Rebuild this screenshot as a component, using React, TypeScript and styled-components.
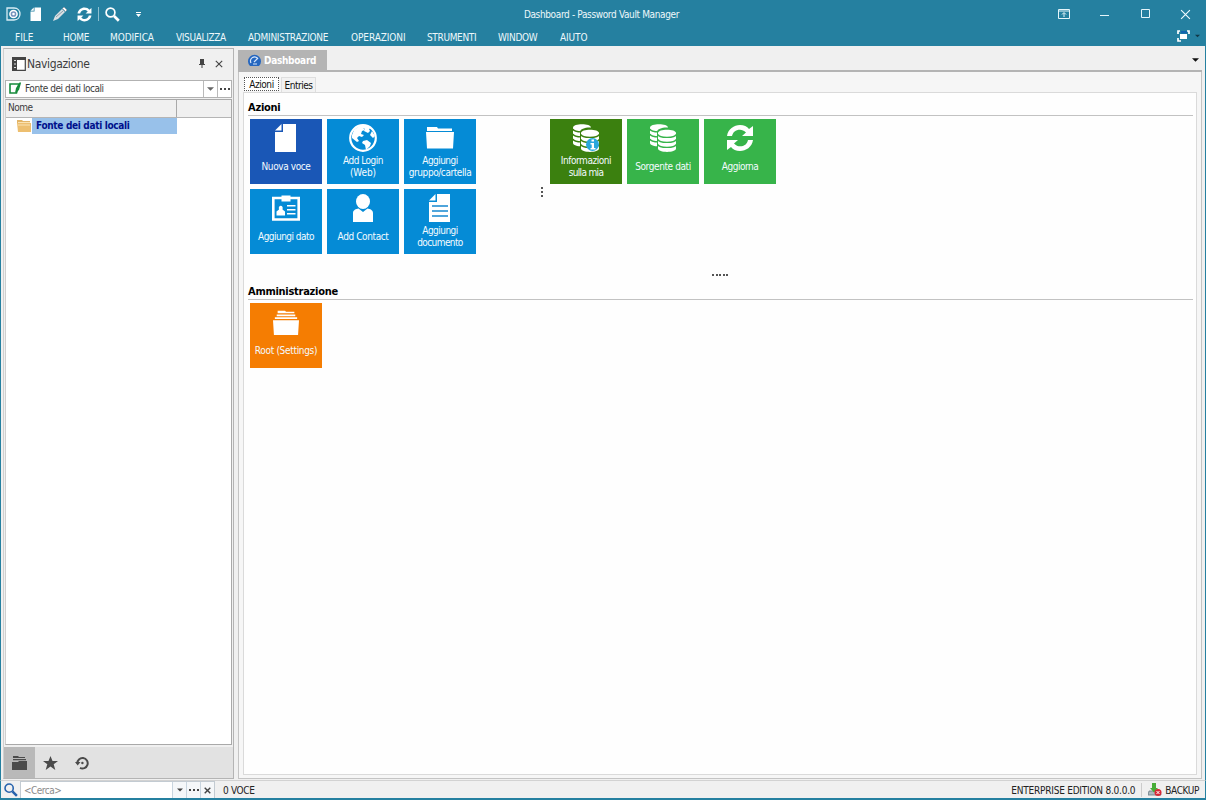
import React from "react";
import styled, { createGlobalStyle } from "styled-components";

const GlobalStyle = createGlobalStyle`
  * { box-sizing: border-box; }
  body { margin: 0; overflow: hidden; }
  body, input { font-family: "DejaVu Sans Condensed", "DejaVu Sans", sans-serif; font-size: 10px; color: #3c3c3c; }
  svg { display: block; flex: none; }
`;

const TEAL = "#2580a0";

const Window = styled.div`
  display: flex; flex-direction: column; width: 1206px; height: 800px;
  background: #f0f0f0; white-space: nowrap;
`;
const Label = styled.span<{ $ls?: number }>`
  letter-spacing: ${p => p.$ls ?? 0}px;
  flex: none;
`;

const Banner = styled.header`background: ${TEAL}; color: #eef8fb; height: 46px; flex: none;`;
const TitleBar = styled.div`display: grid; grid-template-columns: 300px 1fr 300px; height: 28px; align-items: center;`;
const QuickTools = styled.div`display: flex; align-items: center; padding-left: 4px; height: 28px;`;
const Tool = styled.span<{ $w: number }>`display: flex; width: ${p => p.$w}px; justify-content: center;`;
const Title = styled.div`text-align: center; padding-right: 3px; letter-spacing: -0.36px;`;
const WindowButtons = styled.div`display: flex; justify-content: flex-end; padding-right: 15px; gap: 28px; align-items: center;`;
const MenuBar = styled.nav`display: flex; height: 18px; align-items: center; padding-left: 15px;`;
const MenuItem = styled.span<{ $w: number; $ls: number }>`width: ${p => p.$w}px; letter-spacing: ${p => p.$ls}px; flex: none;`;
const MenuEnd = styled.span`margin-left: auto; display: flex; align-items: center; gap: 5px; padding: 0 6px 2px 0;`;

const Body = styled.div`
  display: flex; height: 734px; flex: none; padding: 2px 3px 0 2px; gap: 4px;
  border-left: 1px solid ${TEAL}; border-right: 1px solid ${TEAL};
`;
const Panel = styled.aside`
  width: 231px; height: 731px; border: 1px solid #b4b4b4; border-left-color: #d0d0d0; display: flex; flex-direction: column;
  flex: none; padding: 0 1px;
`;
const PanelHead = styled.div`display: flex; align-items: center; height: 31px; padding: 0 9px 1px 7px; gap: 1px; font-size: 12px;`;
const PanelActions = styled.span`margin-left: auto; display: flex; gap: 10px; align-items: center;`;
const Combo = styled.div`
  display: flex; height: 18px; border: 1px solid #b2b2b2; background: #fff; align-items: center; padding-left: 3px; gap: 4px;
`;
const ComboButton = styled.span<{ $w: number }>`
  width: ${p => p.$w}px; height: 100%; border-left: 1px solid #bababa; display: flex; align-items: center; justify-content: center;
`;
const ComboEnd = styled.span`margin-left: auto; display: flex; height: 100%;`;
const Tree = styled.div`margin-top: 1px; height: 647px; background: #fff; border: 1px solid #a9a9a9; border-left-color: #cfcfcf;`;
const TreeHead = styled.div`
  display: grid; grid-template-columns: 170px 1fr; height: 18px; background: #f0f0f0; border-bottom: 1px solid #b5b5b5;
  letter-spacing: -0.5px;
  & > span { padding: 2px; }
  & > span + span { border-left: 1px solid #a9a9a9; }
`;
const TreeRow = styled.div`display: flex; height: 16px; align-items: center; padding-left: 11px; gap: 1px;`;
const Selected = styled.span`
  background: #98c1ea; color: #00108c; font-weight: bold; width: 145px; height: 16px; line-height: 16px; padding-left: 4px;
  letter-spacing: -0.33px;
`;
const NavTabs = styled.div`display: flex; height: 31px; margin: 2px -1px 0; background: #e2e2e2;`;
const NavTab = styled.span<{ $on?: boolean }>`
  width: 31px; height: 31px; display: flex; align-items: center; justify-content: center; background: ${p => (p.$on ? "#b9b9b9" : "transparent")};
`;

const Main = styled.main`flex: 1; display: flex; flex-direction: column; min-width: 0; padding-top: 2px;`;
const DocTabs = styled.div`display: flex; height: 22px; border-bottom: 2px solid #b4b4b4; align-items: center; padding-right: 3px;`;
const DocTab = styled.div`
  display: flex; align-items: center; gap: 3px; width: 89px; height: 21px; background: #b4b4b4; color: #fff;
  font-weight: bold; padding-left: 10px; margin-right: auto;
`;
const Frame = styled.div`height: 707px; border: 1px solid #c4c4c4; border-top: 0; background: #f6f6f6; padding: 5px 4px 4px;`;
const SubTabs = styled.div`display: flex; height: 15px; align-items: flex-start; padding-left: 1px; color: #111; letter-spacing: -0.45px;`;
const SubTab = styled.span<{ $on?: boolean }>`
  border: 1px ${p => (p.$on ? "dotted #555" : "solid #dedede")}; background: ${p => (p.$on ? "#fff" : "#f2f2f2")};
  width: ${p => (p.$on ? 35 : 35)}px; height: ${p => (p.$on ? 14 : 15)}px; line-height: ${p => (p.$on ? 13 : 16)}px; text-align: center;
  margin-right: 2px; border-bottom-width: ${p => (p.$on ? 1 : 0)}px;
`;
const Page = styled.section`
  height: 683px; border: 1px solid #dadada; background: #fefefe; padding: 8px 3px 0 4px;
`;
const Heading = styled.h2`
  margin: 0; height: 15px; border-bottom: 1px solid #c2c2c2; font-size: 11px; line-height: 13px; color: #000; font-weight: bold;
  letter-spacing: -0.27px;
`;
const Board = styled.div`display: flex; padding: 3px 0 0 2px; height: 158px;`;
const Tiles = styled.div<{ $w: number }>`display: grid; grid-template-columns: repeat(3, 72px); grid-auto-rows: 65px; gap: 5px; width: ${p => p.$w}px; flex: none; align-content: start;`;
const Tile = styled.button<{ $bg: string }>`
  border: 0; padding: 3px 0 0; margin: 0; background: ${p => p.$bg}; color: #f4fbff; font: inherit;
  display: flex; flex-direction: column; align-items: center;
  svg { height: 32px; }
`;
const TileText = styled.span`
  height: 25px; display: flex; flex-direction: column; justify-content: center; align-items: center; line-height: 11.5px;
`;
const Dots = styled.span<{ $vertical?: boolean }>`
  display: flex; flex-direction: ${p => (p.$vertical ? "column" : "row")}; gap: ${p => (p.$vertical ? 2 : 1.5)}px;
  margin: ${p => (p.$vertical ? "68px 7px 0 0" : "0 0 9px 464px")};
  i { width: 2px; height: 2px; background: #555; }
`;

const Status = styled.footer`
  height: 20px; flex: none; display: flex; align-items: center; border: 1px solid ${TEAL}; border-top-color: #d2d2d2; border-bottom-width: 2px;
  padding-left: 3px;
`;
const Search = styled.div`
  display: flex; align-items: center; width: 195px; height: 17px; margin-left: 2px; background: #fff; border: 1px solid #c3cbd2; border-bottom: 0;
  padding-left: 3px; color: #8b8b8b;
`;
const SearchButton = styled.span`width: 14px; height: 100%; border-left: 1px solid #c9d5df; background: #f5f7f9; display: flex; align-items: center; justify-content: center;`;
const StatusText = styled.span<{ $ls: number; $pl?: number }>`color: #222; letter-spacing: ${p => p.$ls}px; padding: 2px 0 0 ${p => p.$pl ?? 0}px;`;
const StatusEnd = styled.span`margin-left: auto; display: flex; align-items: center; padding-right: 6px;`;
const Divider = styled.i<{ $c: string }>`width: 1px; height: 14px; background: ${p => p.$c};`;

const Arrow = ({ c = "#444", s = 7 }: { c?: string; s?: number }) => (
  <svg width={s} height="4" viewBox="0 0 8 4"><path d="M0 0h8L4 4z" fill={c} /></svg>
);
const Cross = ({ c = "#444", s = 8, w = 1.4 }: { c?: string; s?: number; w?: number }) => (
  <svg width={s} height={s} viewBox="0 0 10 10"><path d="M1 1l8 8M9 1l-8 8" stroke={c} strokeWidth={w} /></svg>
);
const Ellipsis = () => (
  <svg width="10" height="2" viewBox="0 0 10 2"><path d="M0 0h2v2H0zM4 0h2v2H4zM8 0h2v2H8z" fill="#444" /></svg>
);
const Lens = ({ c, h, s }: { c: string; h: string; s: number }) => (
  <svg width={s} height={s} viewBox="0 0 15 15">
    <circle cx="5.500" cy="5.500" r="4.400" fill="none" stroke={c} strokeWidth="1.700" />
    <path d="M9 9l4.800 4.800" stroke={h} strokeWidth="2.700" />
  </svg>
);
const Refresh = ({ w }: { w: number }) => (
  <svg width={w} viewBox="0 0 28 28" height={w}>
    <g fill="#fff">
      <path d="M1 12C2 5 8 1 14 1c4 0 7 1.500 9 4l4-3v10H16l4-3.500C18 6.500 16 5.700 14 5.700 9.500 5.700 7 8 6 12z" />
      <path d="M27 16c-1 7-7 11-13 11-4 0-7-1.500-9-4l-4 3V16h11l-4 3.500c2 2 4 2.800 6 2.800 4.500 0 7-2.300 8-6.300z" />
    </g>
  </svg>
);
const Sheet = ({ lines, small }: { lines?: boolean; small?: boolean }) => (
  <svg width={small ? 12 : 22} height={small ? 14 : 32} viewBox={small ? "0 0 22 28" : "0 -1 22 32"}>
    <path d="M8 1h13v28H0V9h8z" fill="#fff" /><path d="M6.500 1v6.500H0z" fill="#fff" />
    {lines && <path d="M3 13h16M3 18h16M3 23h16" stroke="#1688cf" strokeWidth="1.300" />}
  </svg>
);
const Globe = () => (
  <svg width="28" viewBox="0 0 28 32">
    <circle cx="14" cy="16" r="12.800" fill="none" stroke="#fff" strokeWidth="2.200" />
    <path d="M3 13l2-5 5-4 4-1 3 2-3 1 2 2-3 1-1 3 3 1-2 2-3-1-2 2 2 3-2 1-5-4zM16 3l6 3-2 1 1 2-2 2-4-2 1-2-2-1zM14 19l4-1 4 3-1 3-4 4-1-5-3-2zM23 9l3 5-2 2-3-3z" fill="#fff" />
  </svg>
);
const Folder = () => (
  <svg width="28" viewBox="0 0 28 32">
    <path d="M1 7.500V5h10l1 1.500h14V9H1zM0 10h28l-1 16.500H1z" fill="#fff" />
  </svg>
);
const IdCard = () => (
  <svg width="28" viewBox="0 0 28 32">
    <path d="M1.300 6h25.400v21.500H1.300z" fill="none" stroke="#fff" strokeWidth="2.600" />
    <path d="M9.500 3.500h9v6h-9zM4.500 23.500v-4l2.500-2c-1.500-5 5-5 3.500 0l2.500 2v4zM15 13h8.500v1.500H15zM15 17h8.500v1.500H15zM15 21h8.500v1.500H15z" fill="#fff" />
  </svg>
);
const Person = () => (
  <svg width="22" viewBox="0 0 22 32">
    <ellipse cx="11" cy="9.500" rx="7" ry="7.500" fill="#fff" />
    <path d="M1 30V21c0-3 3-4 5.500-4.500L11 20l4.500-3.500C18 17 21 18 21 21v9z" fill="#fff" />
  </svg>
);
const Disk = ({ x, y, bg }: { x: number; y: number; bg: string }) => (
  <g transform={`translate(${x} ${y})`}>
    <path d="M0 3.500C0-1 18-1 18 3.500V19c0 4.500-18 4.500-18 0z" fill="#fff" />
    <path d="M0 5c1 3.800 17 3.800 18 0M0 10c1 3.800 17 3.800 18 0M0 15c1 3.800 17 3.800 18 0" fill="none" stroke={bg} strokeWidth="1.400" />
  </g>
);
const Database = ({ bg, info }: { bg: string; info?: boolean }) => (
  <svg width="28" viewBox="0 0 28 32">
    <Disk x={1} y={2} bg={bg} />
    <path d="M8 10C8 4 27 4 27 10v20H10L8 27z" fill={bg} />
    <Disk x={9} y={7.500} bg={bg} />
    {info && <><circle cx="20.500" cy="22.500" r="6.500" fill="#28a7dd" /><path d="M19.500 17.500H22v2h-2.500zM18.500 21H22v5h1.500v1.500h-5V26h1.200v-3.500h-1.200z" fill="#fff" /></>}
  </svg>
);
const Folders = () => (
  <svg width="26" viewBox="0 0 28 32">
    <path d="M5 4h8l1 1h9v1.500H5zM4 8h20v1.800H4zM2 11h24v1.800H2zM0 14h28l-1 16H1z" fill="#fff" />
  </svg>
);

const menus: [string, number, number][] = [
  ["FILE", 48, 0], ["HOME", 47, -0.3], ["MODIFICA", 66, -0.1], ["VISUALIZZA", 72, -0.35], ["ADMINISTRAZIONE", 103, -0.28],
  ["OPERAZIONI", 76, -0.1], ["STRUMENTI", 71, -0.35], ["WINDOW", 62, -0.3], ["AIUTO", 40, -0.1],
];
type Line = [text: string, spacing: number];
type TileData = { text: Line[]; bg: string; icon: React.ReactNode };
const BLUE = "#058bd6";
const GREEN = "#37b44a";
const actions: TileData[] = [
  { text: [["Nuova voce", -0.4]], bg: "#1a57b6", icon: <Sheet /> },
  { text: [["Add Login", -0.5], ["(Web)", -0.1]], bg: BLUE, icon: <Globe /> },
  { text: [["Aggiungi", -0.55], ["gruppo/cartella", -0.42]], bg: BLUE, icon: <Folder /> },
  { text: [["Aggiungi dato", -0.53]], bg: BLUE, icon: <IdCard /> },
  { text: [["Add Contact", -0.4]], bg: BLUE, icon: <Person /> },
  { text: [["Aggiungi", -0.55], ["documento", -0.6]], bg: BLUE, icon: <Sheet lines /> },
];
const sources: TileData[] = [
  { text: [["Informazioni", -0.45], ["sulla mia", -0.65]], bg: "#3b800f", icon: <Database bg="#3b800f" info /> },
  { text: [["Sorgente dati", -0.4]], bg: GREEN, icon: <Database bg={GREEN} /> },
  { text: [["Aggiorna", -0.5]], bg: GREEN, icon: <Refresh w={28} /> },
];
const admin: TileData[] = [{ text: [["Root (Settings)", -0.32]], bg: "#f57d02", icon: <Folders /> }];

const TileGrid = ({ items, width }: { items: TileData[]; width: number }) => (
  <Tiles $w={width}>
    {items.map(t => (
      <Tile key={t.text.join()} $bg={t.bg}>
        {t.icon}
        <TileText>{t.text.map(([l, ls]) => <Label key={l} $ls={ls}>{l}</Label>)}</TileText>
      </Tile>
    ))}
  </Tiles>
);

export default function App() {
  return (
    <Window>
      <GlobalStyle />
      <Banner>
        <TitleBar>
          <QuickTools>
            <Tool $w={18}>
              <svg width="15" height="14" viewBox="0 0 15 14">
                <path d="M1 1h7c4 0 6 3 6 6s-2 6-6 6H1z" fill="none" stroke="#d8edf5" strokeWidth="1.300" />
                <circle cx="7.500" cy="7" r="3.600" fill="#7793bd" stroke="#fff" strokeWidth="1.500" /><circle cx="7.500" cy="7" r="1.300" fill="#fff" />
              </svg>
            </Tool>
            <Tool $w={28}><Sheet small /></Tool>
            <Tool $w={20}>
              <svg width="14" height="14" viewBox="0 0 14 14">
                <path d="M0 14l2-5 7-7 3 3-7 7z" fill="#d9dfe3" /><path d="M9.500 1.500L11 0l3 3-1.500 1.500zM3 10l7-6" fill="#fff" stroke="#8ba0ad" />
              </svg>
            </Tool>
            <Tool $w={28}><Refresh w={15} /></Tool>
            <Divider $c="#8dbfd0" />
            <Tool $w={27}><Lens c="#fff" h="#fff" s={15} /></Tool>
            <Tool $w={25}>
              <svg width="5" height="5" viewBox="0 0 5 5"><path d="M0 0h5v1H0zM0 2h5L2.500 5z" fill="#fff" /></svg>
            </Tool>
          </QuickTools>
          <Title>Dashboard - Password Vault Manager</Title>
          <WindowButtons>
            <svg width="12" height="10" viewBox="0 0 12 10"><path d="M.500.500h11v9H.500zM0 2h12M6 8V4M4 5.500l2-2 2 2" fill="none" stroke="#e5f5fa" /></svg>
            <svg width="12" height="10" viewBox="0 0 12 10"><path d="M2 6.500h9" stroke="#e5f5fa" /></svg>
            <svg width="14" height="10" viewBox="0 0 14 10"><path d="M3.500.500h8v8h-8z" fill="none" stroke="#e5f5fa" /></svg>
            <Cross c="#f2fbff" s={11} w={1} />
          </WindowButtons>
        </TitleBar>
        <MenuBar>
          {menus.map(([m, w, ls]) => <MenuItem key={m} $w={w} $ls={ls}>{m}</MenuItem>)}
          <MenuEnd>
            <svg width="13" height="12" viewBox="0 0 13 12">
              <path d="M3 4h7v5H3z" fill="#fff" /><path d="M4 1h6v2.500H4z" fill="#1264ae" />
              <path d="M1 4V1h2M10 1h2v3M1 8v3h3" fill="none" stroke="#fff" strokeWidth="1.700" />
            </svg>
            <Arrow c="#123847" s={5} />
          </MenuEnd>
        </MenuBar>
      </Banner>

      <Body>
        <Panel>
          <PanelHead>
            <svg width="14" height="14" viewBox="0 0 14 14">
              <path d="M.700.700h12.600v12.600H.700z" fill="#fff" stroke="#444" strokeWidth="1.200" /><path d="M0 0h5v14H0zM5 0h9v3H5z" fill="#444" />
              <path d="M2 3.500h2M2 7h2M2 10.500h2" stroke="#ddd" />
            </svg>
            <Label $ls={-0.35}>Navigazione</Label>
            <PanelActions>
              <svg width="6" height="9" viewBox="0 0 6 9"><path d="M1 0h4v5h1v1H0V5h1zM2.500 6h1v3h-1z" fill="#444" /></svg>
              <Cross />
            </PanelActions>
          </PanelHead>
          <Combo>
            <svg width="12" height="13" viewBox="0 0 12 13">
              <path d="M1 2h9L7.500 11H1z" fill="#fff" stroke="#168b3b" strokeWidth="1.600" /><path d="M6 11l1-5 4-6 1 1-2 7z" fill="#168b3b" />
            </svg>
            <Label $ls={-0.45}>Fonte dei dati locali</Label>
            <ComboEnd>
              <ComboButton $w={14}><Arrow c="#666" /></ComboButton>
              <ComboButton $w={14}><Ellipsis /></ComboButton>
            </ComboEnd>
          </Combo>
          <Tree>
            <TreeHead><span>Nome</span><span /></TreeHead>
            <TreeRow>
              <svg width="14" height="13" viewBox="0 0 14 13">
                <path d="M0 1h5l1 1h7v2H0z" fill="#e3b568" /><path d="M0 4h14v9H1z" fill="#edbf70" /><path d="M1 3.500h12M1 6h12" stroke="#fae3b4" />
              </svg>
              <Selected>Fonte dei dati locali</Selected>
            </TreeRow>
          </Tree>
          <NavTabs>
            <NavTab $on>
              <svg width="15" height="14" viewBox="0 0 15 14"><path d="M1 0h5l1 1h6v1H1zM1 3h13v1.300H1zM0 6h6l1-1h8v9H0z" fill="#4b4b4b" /></svg>
            </NavTab>
            <NavTab>
              <svg width="15" height="14" viewBox="0 0 15 14"><path d="M7.500 0l2 5H15l-4.300 3.300 1.600 5.700-4.800-3.500L2.700 14l1.600-5.700L0 5h5.500z" fill="#4b4b4b" /></svg>
            </NavTab>
            <NavTab>
              <svg width="14" height="14" viewBox="0 0 14 14">
                <path d="M2.300 7.500A5.200 5.200 0 1 1 5 11.800" fill="none" stroke="#4b4b4b" strokeWidth="2" /><path d="M0 6h5.500L2.700 9.500z" fill="#4b4b4b" /><circle cx="7.400" cy="7" r="1.200" fill="#4b4b4b" />
              </svg>
            </NavTab>
          </NavTabs>
        </Panel>

        <Main>
          <DocTabs>
            <DocTab>
              <svg width="13" height="13" viewBox="0 0 13 13">
                <path d="M2 12a6.500 6.500 0 1 1 9 0z" fill="#2466bf" /><path d="M3 9a4 4 0 0 1 7-4M6 8l4-4M5 10h4" fill="none" stroke="#d7e7fb" strokeWidth="1.200" />
              </svg>
              <Label $ls={-0.3}>Dashboard</Label>
            </DocTab>
            <Arrow c="#111" />
          </DocTabs>
          <Frame>
            <SubTabs><SubTab $on>Azioni</SubTab><SubTab>Entries</SubTab></SubTabs>
            <Page>
              <Heading>Azioni</Heading>
              <Board>
                <TileGrid items={actions} width={291} />
                <Dots $vertical><i /><i /><i /></Dots>
                <TileGrid items={sources} width={226} />
              </Board>
              <div>
                <Dots><i /><i /><i /><i /><i /></Dots>
                <Heading>Amministrazione</Heading>
                <Board><TileGrid items={admin} width={226} /></Board>
              </div>
            </Page>
          </Frame>
        </Main>
      </Body>

      <Status>
        <Lens c="#2662ac" h="#2662ac" s={14} />
        <Search>
          <Label $ls={-0.5}>&lt;Cerca&gt;</Label>
          <ComboEnd>
            <SearchButton><Arrow s={6} /></SearchButton>
            <SearchButton><Ellipsis /></SearchButton>
            <SearchButton><Cross s={7} w={2} /></SearchButton>
          </ComboEnd>
        </Search>
        <StatusText $ls={-0.35} $pl={8}>0 VOCE</StatusText>
        <StatusEnd>
          <StatusText $ls={-0.23}>ENTERPRISE EDITION 8.0.0.0</StatusText>
          <Tool $w={13}><Divider $c="#ccc" /></Tool>
          <svg width="14" height="13" viewBox="0 0 14 13">
            <path d="M1 8l-1 4h13l-1-4z" fill="#aebac0" stroke="#687983" strokeWidth=".800" />
            <path d="M4 0h4v5h2L6 9.500 2 5h2z" fill="#48ad38" /><circle cx="10" cy="9.500" r="3.500" fill="#d72735" /><path d="M8.500 8l3 3M11.500 8l-3 3" stroke="#fff" />
          </svg>
          <Tool $w={3} />
          <StatusText $ls={-0.4}>BACKUP</StatusText>
        </StatusEnd>
      </Status>
    </Window>
  );
}
